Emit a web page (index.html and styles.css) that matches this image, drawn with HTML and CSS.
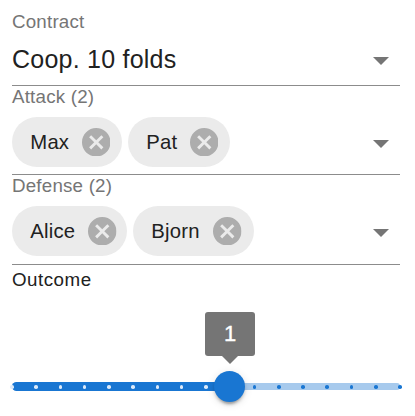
FILE: index.html
```html
<!DOCTYPE html>
<html lang="en">
<head>
<meta charset="utf-8">
<title>Contract</title>
<link rel="stylesheet" href="styles.css">
</head>
<body>
<svg class="defs" width="0" height="0">
  <symbol id="cancel" viewBox="2 2 20 20"><path d="M12 2C6.47 2 2 6.47 2 12s4.47 10 10 10 10-4.47 10-10S17.53 2 12 2zm5 13.59L15.59 17 12 13.41 8.41 17 7 15.59 10.59 12 7 8.41 8.41 7 12 10.59 15.59 7 17 8.41 13.41 12 17 15.59z"/></symbol>
  <symbol id="arrow" viewBox="0 0 16 8"><path d="M0 0h16L8 8z"/></symbol>
</svg>
<main class="form">
  <section class="field contract">
    <div class="label">Contract</div>
    <div class="select"><span class="value">Coop. 10 folds</span><svg class="arrow"><use href="#arrow"/></svg></div>
  </section>
  <section class="field attack">
    <div class="label">Attack (2)</div>
    <div class="select">
      <div class="chips">
        <div class="chip max"><span>Max</span><svg class="cancel"><use href="#cancel"/></svg></div>
        <div class="chip pat"><span>Pat</span><svg class="cancel"><use href="#cancel"/></svg></div>
      </div>
      <svg class="arrow"><use href="#arrow"/></svg>
    </div>
  </section>
  <section class="field defense">
    <div class="label">Defense (2)</div>
    <div class="select">
      <div class="chips">
        <div class="chip alice"><span>Alice</span><svg class="cancel"><use href="#cancel"/></svg></div>
        <div class="chip bjorn"><span>Bjorn</span><svg class="cancel"><use href="#cancel"/></svg></div>
      </div>
      <svg class="arrow"><use href="#arrow"/></svg>
    </div>
  </section>
  <section class="outcome">
    <div class="label dark">Outcome</div>
    <div class="slider">
      <div class="rail"></div>
      <div class="track"></div>
      <div class="marks"><i></i><i></i><i></i><i></i><i></i><i></i><i></i><i></i><i></i><i></i><i></i><i></i><i></i><i></i><i></i><i></i><i></i></div>
      <div class="thumb"></div>
      <div class="tooltip">1</div>
    </div>
  </section>
</main>
</body>
</html>
```
FILE: styles.css
```css
* { box-sizing: border-box; }
body {
  margin: 0;
  background: #fff;
  color: #212121;
  font-family: "Liberation Sans", Arial, sans-serif;
}
.defs { position: absolute; }
.form { width: 388px; margin-left: 12px; }
.field {
  display: flex;
  flex-direction: column;
  border-bottom: 1px solid #8c8c8c;
}
.contract { height: 86px; padding-top: 11px; }
.attack { height: 89px; }
.defense { height: 90px; }
.label {
  height: 22px;
  line-height: 22px;
  font-size: 18.75px;
  letter-spacing: 0.2px;
  color: #757575;
}
.label.dark { color: #212121; margin-top: 4px; letter-spacing: 0.5px; }
.select {
  display: flex;
  align-items: center;
  justify-content: space-between;
  flex: 1;
  padding-right: 11px;
}
.value { font-size: 25px; letter-spacing: 0.23px; line-height: 30px; }
.arrow { width: 16px; height: 8px; fill: #757575; margin-top: 5px; }
.contract .arrow { margin-top: 4px; }
.chips { display: flex; gap: 6px; margin-top: 2px; }
.defense .chips { margin-top: 0; }
.chip {
  display: flex;
  align-items: center;
  justify-content: space-between;
  height: 50px;
  padding: 0 12px 0 18.3px;
  border-radius: 25px;
  background: #ebebeb;
  font-size: 20.3px;
  letter-spacing: 0.2px;
}
.max { width: 110px; }
.pat { width: 102px; }
.alice { width: 115px; padding-right: 10.5px; }
.bjorn { width: 120.5px; }
.defense .chip span { padding-top: 1px; }
.cancel { width: 28.5px; height: 28.5px; fill: #adadad; }
.defense .cancel { margin-top: 1px; }
.slider { position: relative; height: 125px; }
.rail, .track { position: absolute; left: 0; }
.rail { top: 92.2px; width: 388px; height: 6.6px; border-radius: 3px; background: #a7caed; }
.track { top: 91px; width: 218px; height: 9px; border-radius: 4.5px; background: #1976d2; }
.marks {
  position: absolute;
  left: -2px;
  right: -2px;
  top: 94px;
  display: flex;
  justify-content: space-between;
}
.marks i { width: 3.6px; height: 3.6px; border-radius: 50%; background: #dceafa; }
.marks i:nth-child(n+10) { background: #1976d2; }
.thumb {
  position: absolute;
  left: 202px;
  top: 80px;
  width: 31px;
  height: 31px;
  border-radius: 50%;
  background: #1976d2;
  box-shadow: 0 5px 2px -3px rgba(0,0,0,.2), 0 3px 3px rgba(0,0,0,.14), 0 2px 8px rgba(0,0,0,.12);
}
.tooltip {
  position: absolute;
  left: 193px;
  top: 21px;
  width: 50px;
  height: 44px;
  border-radius: 3px;
  background: #757575;
  color: #fff;
  font-size: 22px;
  line-height: 44px;
  text-align: center;
  -webkit-text-stroke: 0.4px #fff;
}
.tooltip::after {
  content: "";
  position: absolute;
  left: 16px;
  top: 43px;
  border: 9px solid transparent;
  border-top-color: #757575;
  border-bottom: 0;
}
```
